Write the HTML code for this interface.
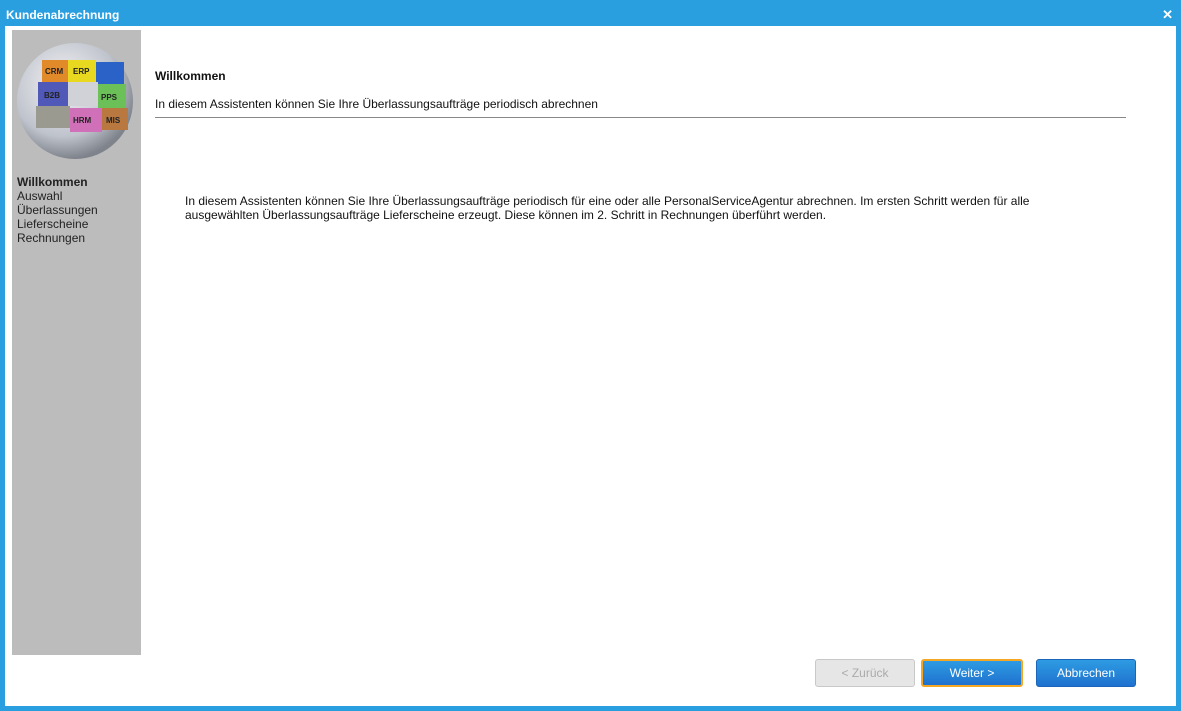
<!DOCTYPE html>
<html><head><meta charset="utf-8"><style>
body{margin:0;width:1181px;height:711px;background:#2a9fe0;font-family:"Liberation Sans",sans-serif;position:relative;overflow:hidden}
.t{position:absolute;left:6px;top:8px;color:#fff;font-weight:bold;font-size:12px}
.x{position:absolute;right:8px;top:7px;color:#fff;font-weight:bold;font-size:13px}
.in{position:absolute;left:5px;top:26px;width:1171px;height:680px;background:#fff}
.sb{position:absolute;left:12px;top:30px;width:129px;height:625px;background:#bcbcbc}
.nav{position:absolute;left:17px;top:175px;font-size:12px;line-height:14px;color:#222}
.a{position:absolute;font-size:12px;color:#111}
.b{position:absolute;top:659px;height:28px;border-radius:3px;font-size:12px;display:flex;align-items:center;justify-content:center;box-sizing:border-box}
.bl{background:linear-gradient(#2e9be2,#1f72cf);color:#fff;border:1px solid #1a66b8}
</style></head><body>
<div class="t">Kundenabrechnung</div><div class="x">✕</div>
<div class="in"></div>
<div class="sb"></div>
<svg style="position:absolute;left:12px;top:40px" width="129" height="125">
<defs><radialGradient id="g" cx="40%" cy="35%" r="65%"><stop offset="0" stop-color="#f4f4f6"/><stop offset=".7" stop-color="#bfc3cc"/><stop offset="1" stop-color="#7f838c"/></radialGradient></defs>
<circle cx="63" cy="61" r="58" fill="url(#g)"/>
<rect x="30" y="20" width="26" height="22" fill="#e08a2a"/><rect x="56" y="20" width="28" height="22" fill="#e8d820"/><rect x="84" y="22" width="28" height="22" fill="#2a62c8"/>
<rect x="26" y="42" width="30" height="24" fill="#5058b8"/><rect x="56" y="42" width="30" height="24" fill="#d0d2d8"/><rect x="86" y="44" width="28" height="24" fill="#6cc058"/>
<rect x="24" y="66" width="34" height="22" fill="#9a9a90"/><rect x="58" y="68" width="32" height="24" fill="#d070b8"/><rect x="90" y="68" width="26" height="22" fill="#b87840"/>
<g font-size="8" font-weight="bold" font-family="Liberation Sans" fill="#222"><text x="33" y="34">CRM</text><text x="61" y="34">ERP</text><text x="32" y="58">B2B</text><text x="89" y="60">PPS</text><text x="61" y="83">HRM</text><text x="94" y="83">MIS</text></g>
</svg>
<div class="nav"><b>Willkommen</b><br>Auswahl<br>Überlassungen<br>Lieferscheine<br>Rechnungen</div>
<div class="a" style="left:155px;top:69px;font-weight:bold">Willkommen</div>
<div class="a" style="left:155px;top:97px">In diesem Assistenten können Sie Ihre Überlassungsaufträge periodisch abrechnen</div>
<div style="position:absolute;left:155px;top:117px;width:971px;height:1px;background:#888"></div>
<div class="a" style="left:185px;top:194px;line-height:14px">In diesem Assistenten können Sie Ihre Überlassungsaufträge periodisch für eine oder alle PersonalServiceAgentur abrechnen. Im ersten Schritt werden für alle<br>ausgewählten Überlassungsaufträge Lieferscheine erzeugt. Diese können im 2. Schritt in Rechnungen überführt werden.</div>
<div class="b" style="left:815px;width:100px;background:#e6e6e6;border:1px solid #c8c8c8;color:#aaa">&lt; Zurück</div>
<div class="b bl" style="left:921px;width:102px;border:2px solid #f5a623">Weiter &gt;</div>
<div class="b bl" style="left:1036px;width:100px">Abbrechen</div>
</body></html>
